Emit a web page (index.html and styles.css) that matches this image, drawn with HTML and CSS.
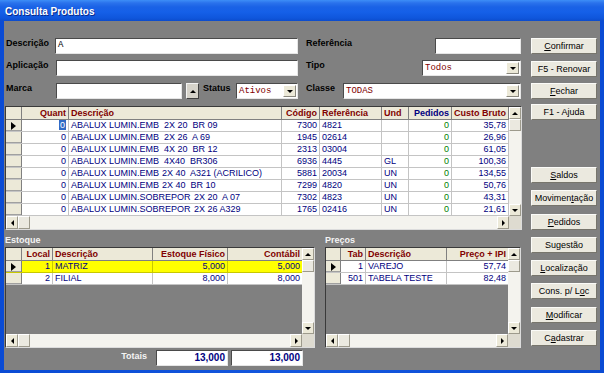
FILE: index.html
```html
<!DOCTYPE html>
<html>
<head>
<meta charset="utf-8">
<title>Consulta Produtos</title>
<link rel="stylesheet" href="styles.css">
</head>
<body>
<div class="win">
  <div class="title">Consulta Produtos</div>
  <div class="body">
    <div class="main">
      <div class="frow">
        <span class="lbl w50">Descrição</span>
        <span class="inp w243 mono">A</span>
        <span class="lbl lr w129">Referência</span>
        <span class="inp w86"></span>
      </div>
      <div class="frow r2">
        <span class="lbl w51">Aplicação</span>
        <span class="inp w242"></span>
        <span class="lbl lr w116">Tipo</span>
        <span class="sel w99"><span class="val">Todos</span><span class="dd"><i class="tri-d"></i></span></span>
      </div>
      <div class="frow r3">
        <span class="lbl w51">Marca</span>
        <span class="inp w126"></span>
        <span class="sbtn"><i class="tri-u"></i></span>
        <span class="lbl w33">Status</span>
        <span class="sel w62"><span class="val">Ativos</span><span class="dd"><i class="tri-d"></i></span></span>
        <span class="lbl lr w37">Classe</span>
        <span class="sel w178"><span class="val">TODAS</span><span class="dd"><i class="tri-d"></i></span></span>
      </div>

      <div class="grid g-main">
        <div class="cells">
          <div class="hrow cols-main">
            <span class="ind"></span><span class="rt">Quant</span><span>Descrição</span><span class="rt">Código</span><span>Referência</span><span>Und</span><span class="rt blue">Pedidos</span><span class="rt">Custo Bruto</span>
          </div>
          <div class="row cols-main">
            <span class="ind"><i class="tri-ind"></i></span><span class="rt"><b class="cur">0</b></span><span><span class="d1">ABALUX LUMIN.EMB</span>2X 20  BR 09</span><span class="rt">7300</span><span>4821</span><span></span><span class="rt green">0</span><span class="rt">35,78</span>
          </div>
          <div class="row cols-main">
            <span class="ind"></span><span class="rt">0</span><span><span class="d1">ABALUX LUMIN.EMB</span>2X 26  A 69</span><span class="rt">1945</span><span>02614</span><span></span><span class="rt green">0</span><span class="rt">26,96</span>
          </div>
          <div class="row cols-main">
            <span class="ind"></span><span class="rt">0</span><span><span class="d1">ABALUX LUMIN.EMB</span>4X 20  BR 12</span><span class="rt">2313</span><span>03004</span><span></span><span class="rt green">0</span><span class="rt">61,05</span>
          </div>
          <div class="row cols-main">
            <span class="ind"></span><span class="rt">0</span><span><span class="d1">ABALUX LUMIN.EMB</span>4X40  BR306</span><span class="rt">6936</span><span>4445</span><span>GL</span><span class="rt green">0</span><span class="rt">100,36</span>
          </div>
          <div class="row cols-main">
            <span class="ind"></span><span class="rt">0</span><span><span class="d1 d1b">ABALUX LUMIN.EMB</span>2X 40  A321 (ACRILICO)</span><span class="rt">5881</span><span>20034</span><span>UN</span><span class="rt green">0</span><span class="rt">134,55</span>
          </div>
          <div class="row cols-main">
            <span class="ind"></span><span class="rt">0</span><span><span class="d1 d1b">ABALUX LUMIN.EMB</span>2X 40  BR 10</span><span class="rt">7299</span><span>4820</span><span>UN</span><span class="rt green">0</span><span class="rt">50,76</span>
          </div>
          <div class="row cols-main">
            <span class="ind"></span><span class="rt">0</span><span><span class="d2">ABALUX LUMIN.SOBREPOR</span>2X 20  A 07</span><span class="rt">7302</span><span>4823</span><span>UN</span><span class="rt green">0</span><span class="rt">43,31</span>
          </div>
          <div class="row cols-main">
            <span class="ind"></span><span class="rt">0</span><span><span class="d2">ABALUX LUMIN.SOBREPOR</span>2X 26 A329</span><span class="rt">1765</span><span>02416</span><span>UN</span><span class="rt green">0</span><span class="rt">21,61</span>
          </div>
        </div>
        <div class="vs"><span class="sb"><i class="tri-u"></i></span><span class="thumb"></span><span class="track"></span><span class="sb"><i class="tri-d"></i></span></div>
        <div class="hs"><span class="sb"><i class="tri-l"></i></span><span class="thumb"></span><span class="track"></span><span class="sb"><i class="tri-r"></i></span></div>
        <div class="corner"></div>
      </div>

      <div class="lower">
        <div class="sec sec-est">
          <div class="sec-title">Estoque</div>
          <div class="grid g-sub g-est">
            <div class="cells">
              <div class="hrow cols-est">
                <span class="ind"></span><span class="rt">Local</span><span>Descrição</span><span class="rt">Estoque Físico</span><span class="rt">Contábil</span>
              </div>
              <div class="row cols-est yellow">
                <span class="ind"><i class="tri-ind"></i></span><span class="rt">1</span><span>MATRIZ</span><span class="rt">5,000</span><span class="rt">5,000</span>
              </div>
              <div class="row cols-est">
                <span class="ind"></span><span class="rt">2</span><span>FILIAL</span><span class="rt">8,000</span><span class="rt">8,000</span>
              </div>
            </div>
            <div class="vs"><span class="sb"><i class="tri-u"></i></span><span class="thumb"></span><span class="track"></span><span class="sb"><i class="tri-d"></i></span></div>
            <div class="hs"><span class="sb"><i class="tri-l"></i></span><span class="thumb"></span><span class="track"></span><span class="sb"><i class="tri-r"></i></span></div>
            <div class="corner"></div>
          </div>
          <div class="totals">
            <span class="tot-lbl">Totais</span>
            <span class="tot">13,000</span>
            <span class="tot">13,000</span>
          </div>
        </div>
        <div class="sec sec-pre">
          <div class="sec-title">Preços</div>
          <div class="grid g-sub g-pre">
            <div class="cells">
              <div class="hrow cols-pre">
                <span class="ind"></span><span class="rt">Tab</span><span>Descrição</span><span class="rt">Preço + IPI</span>
              </div>
              <div class="row cols-pre">
                <span class="ind"><i class="tri-ind"></i></span><span class="rt">1</span><span>VAREJO</span><span class="rt">57,74</span>
              </div>
              <div class="row cols-pre">
                <span class="ind"></span><span class="rt">501</span><span>TABELA TESTE</span><span class="rt">82,48</span>
              </div>
            </div>
            <div class="vs"><span class="sb"><i class="tri-u"></i></span><span class="thumb"></span><span class="track"></span><span class="sb"><i class="tri-d"></i></span></div>
            <div class="hs"><span class="sb"><i class="tri-l"></i></span><span class="thumb"></span><span class="track"></span><span class="sb"><i class="tri-r"></i></span></div>
            <div class="corner"></div>
          </div>
        </div>
      </div>
    </div>

    <div class="buttons">
      <span class="btn"><u>C</u>onfirmar</span>
      <span class="btn b2">F5 - Renovar</span>
      <span class="btn b3"><u>F</u>echar</span>
      <span class="btn b4">F1 - Ajuda</span>
      <span class="btn b5"><u>S</u>aldos</span>
      <span class="btn bn">Movimen<u>t</u>ação</span>
      <span class="btn bn"><u>P</u>edidos</span>
      <span class="btn bn">Sugestão</span>
      <span class="btn bn"><u>L</u>ocalização</span>
      <span class="btn bn">Cons. p/ L<u>o</u>c</span>
      <span class="btn bn"><u>M</u>odificar</span>
      <span class="btn bn">C<u>a</u>dastrar</span>
    </div>
  </div>
</div>
</body>
</html>
```

FILE: styles.css
```css
* { box-sizing: border-box; margin: 0; padding: 0; }
html, body { width: 604px; height: 373px; overflow: hidden; }
body {
  background: #0d4fd6;
  font-family: "Liberation Sans Narrow", "Liberation Sans", Arial, sans-serif;
  font-size: 9px;
  color: #000;
}
i { display: block; }

.win {
  width: 604px;
  height: 373px;
  display: flex;
  flex-direction: column;
  background: linear-gradient(to right, #0a4bd4, #1457de 50%, #0a4bd4);
}
.title {
  height: 21px;
  flex: none;
  display: flex;
  align-items: center;
  padding: 2px 0 0 5px;
  color: #fff;
  font: bold 10px "Liberation Sans", Arial, sans-serif;
  text-shadow: 1px 1px 0 #0a2a8a;
  background: linear-gradient(to bottom, #3d8ef7 0, #2a72ec 3px, #1a62e6 7px, #1560e8 12px, #0f56dc 18px, #0c4ccc 21px);
}
.body {
  flex: 1;
  margin: 0 4px 3px 4px;
  background: #808080;
  display: flex;
  gap: 8px;
  padding: 0 3px 0 1px;
}
.main {
  width: 518px;
  display: flex;
  flex-direction: column;
  padding-top: 17px;
}

/* form */
.frow { display: flex; height: 16px; }
.frow.r2 { margin-top: 6px; }
.frow.r3 { margin-top: 7px; }
.lbl {
  font: bold 9px "Liberation Sans", Arial, sans-serif;
  line-height: 11px;
  padding-left: 1px;
  align-self: flex-start;
  white-space: nowrap;
}
.lr { margin-left: 8px; padding-left: 0; }
.w50 { width: 50px; } .w51 { width: 51px; } .w33 { width: 33px; padding-left: 0; }
.w129 { width: 129px; } .w116 { width: 116px; } .w37 { width: 37px; }
.w243 { width: 243px; } .w242 { width: 242px; } .w126 { width: 126px; }
.w86 { width: 86px; } .w99 { width: 99px; } .w62 { width: 62px; } .w178 { width: 178px; }
.inp, .sel {
  height: 16px;
  background: #fff;
  border: 1px solid;
  border-color: #4a4a4a #e6e6e6 #e6e6e6 #4a4a4a;
}
.mono, .sel .val {
  font-family: "Liberation Mono", "Courier New", monospace;
  font-size: 9px;
  line-height: 13px;
  padding-left: 2px;
}
.sel { display: flex; }
.sel .val { flex: 1; color: #800000; padding-top: 1px; }
.dd {
  width: 13px;
  margin: 1px;
  background: #ece9d8;
  border: 1px solid;
  border-color: #fff #8a887e #8a887e #fff;
  display: flex;
  align-items: center;
  justify-content: center;
}
.sbtn {
  width: 13px;
  height: 16px;
  margin: 0 4px;
  background: #d6d3ca;
  border: 1px solid;
  border-color: #f4f4f4 #404040 #404040 #f4f4f4;
  display: flex;
  align-items: center;
  justify-content: center;
}

/* triangles */
.tri-d { width: 0; height: 0; border-left: 3px solid transparent; border-right: 3px solid transparent; border-top: 3px solid #000; }
.tri-u { width: 0; height: 0; border-left: 3px solid transparent; border-right: 3px solid transparent; border-bottom: 3px solid #000; }
.tri-l { width: 0; height: 0; border-top: 3px solid transparent; border-bottom: 3px solid transparent; border-right: 3px solid #000; }
.tri-r { width: 0; height: 0; border-top: 3px solid transparent; border-bottom: 3px solid transparent; border-left: 3px solid #000; }
.tri-ind { width: 0; height: 0; border-top: 4px solid transparent; border-bottom: 4px solid transparent; border-left: 5px solid #000; }

/* grids */
.grid {
  display: grid;
  grid-template-columns: 1fr 12px;
  grid-template-rows: 1fr 13px;
  border: 1px solid #3a3a3a;
  border-right-color: #dcdcdc;
  border-bottom-color: #dcdcdc;
  background: #808080;
}
.g-main { width: 517px; height: 124px; margin-top: 7px; }
.cells { overflow: hidden; }
.hrow, .row { display: grid; width: fit-content; }
.hrow {
  height: 13px;
  background: #ece9d8;
  border-bottom: 1px solid #808080;
}
.hrow > span {
  font: bold 9px "Liberation Sans", Arial, sans-serif;
  color: #800000;
  line-height: 12px;
  padding: 0 2px;
  border-right: 1px solid #808080;
  white-space: nowrap;
  overflow: hidden;
}
.hrow > span.blue { color: #000080; }
.row {
  height: 12px;
  background: #fff;
  border-bottom: 1px solid #c4c4c4;
}
.row > span {
  color: #000080;
  line-height: 11px;
  padding: 0 2px;
  border-right: 1px solid #c4c4c4;
  white-space: pre;
  overflow: hidden;
}
.hrow > span.ind, .row > span.ind {
  background: #ece9d8;
  border-right: 1px solid #808080;
  display: flex;
  align-items: center;
  justify-content: center;
  padding: 0;
}
.row > span.ind { box-shadow: inset 0 -1px 0 #a0a0a0; }
.rt { text-align: right; }
.row > span.green { color: #008000; }
.cur { font-weight: normal; background: #316ac5; color: #fff; padding: 0 1px; }
.d1 { display: inline-block; width: 93px; }
.d1b { width: 91px; }
.d2 { display: inline-block; width: 123px; }
.cols-main { grid-template-columns: 16px 47px 213px 38px 62px 27px 43px 57px; }
.cols-est { grid-template-columns: 16px 31px 100px 75px 75px; }
.cols-pre { grid-template-columns: 15px 25px 81px 62px; }
.row.yellow > span { background: #ffff00; border-right-color: #c8c800; }
.row.yellow > span.ind { background: #ece9d8; border-right-color: #808080; }
.row.yellow { border-bottom-color: #c8c800; }

/* scrollbars */
.vs { display: flex; flex-direction: column; }
.hs { display: flex; }
.sb, .thumb {
  flex: none;
  width: 12px;
  height: 12px;
  background: #ece9d8;
  border: 1px solid;
  border-color: #fff #9d9a8c #9d9a8c #fff;
  display: flex;
  align-items: center;
  justify-content: center;
}
.hs .sb, .hs .thumb { height: 13px; }
.thumb { background: #ebe9e0; }
.track { flex: 1; background: #f4f3ee; }
.corner { background: #dedbd0; }

/* lower section */
.lower { display: flex; gap: 10px; }
.sec { display: flex; flex-direction: column; }
.sec-est { width: 310px; }
.sec-pre { width: 196px; }
.sec-title {
  height: 17px;
  padding-top: 4px;
  font: bold 9px "Liberation Sans", Arial, sans-serif;
  line-height: 12px;
  color: #f4f4f4;
}
.g-sub { height: 101px; }
.totals {
  margin-top: 2px;
  height: 16px;
  display: flex;
  justify-content: flex-end;
  gap: 3px;
  padding-right: 12px;
}
.tot-lbl {
  font: bold 9px "Liberation Sans", Arial, sans-serif;
  color: #f4f4f4;
  line-height: 12px;
  margin-right: 6px;
  align-self: flex-start;
}
.tot {
  width: 72px;
  background: #fff;
  border: 1px solid;
  border-color: #4a4a4a #e6e6e6 #e6e6e6 #4a4a4a;
  font: bold 10px "Liberation Sans", Arial, sans-serif;
  color: #000080;
  text-align: right;
  padding-right: 2px;
  line-height: 14px;
}

/* buttons */
.buttons {
  width: 66px;
  display: flex;
  flex-direction: column;
  padding-top: 17px;
}
.btn {
  height: 16px;
  flex: none;
  background: #ebe9df;
  border: 1px solid;
  border-color: #fbfbf8 #77756c #77756c #fbfbf8;
  text-align: center;
  line-height: 14px;
  white-space: nowrap;
  color: #000;
}
.b2 { margin-top: 7px; }
.b3 { margin-top: 6px; }
.b4 { margin-top: 5px; }
.b5 { margin-top: 47px; }
.bn { margin-top: 7.3px; }
```
